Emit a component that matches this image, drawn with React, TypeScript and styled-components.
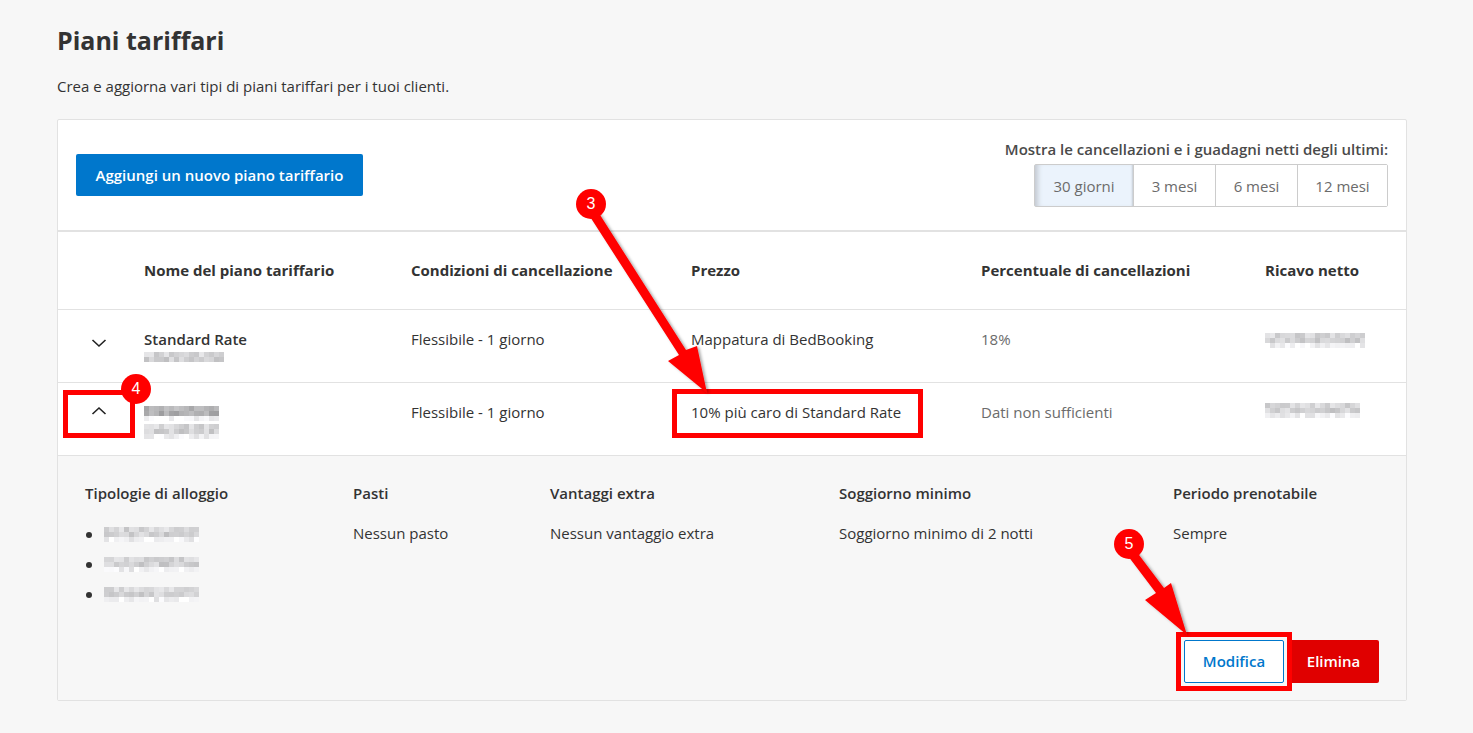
import React from "react";
import styled, { createGlobalStyle } from "styled-components";

const GlobalStyle = createGlobalStyle`
  html, body {
    margin: 0;
    padding: 0;
    background: #f7f7f7;
    color: #333;
    font-family: "Open Sans", "Noto Sans", "Liberation Sans", sans-serif;
    font-size: 15px;
    overflow: hidden;
  }
`;

const Page = styled.div`
  position: relative;
  width: 1473px;
  height: 733px;
  box-sizing: border-box;
  padding: 0 66px 0 57px;
`;

const Title = styled.h1`
  margin: 0;
  padding-top: 22px;
  font-size: 25px;
  line-height: 36px;
  font-weight: 700;
  color: #333;
`;

const Intro = styled.p`
  margin: 19px 0 0;
  font-size: 15px;
  line-height: 19px;
  color: #333;
`;

const Card = styled.section`
  margin-top: 23px;
  background: #fff;
  border: 1px solid #e2e2e2;
  border-radius: 2px;
  height: 582px;
  box-sizing: border-box;
`;

const Toolbar = styled.div`
  height: 112px;
  box-sizing: border-box;
  display: flex;
  justify-content: space-between;
  align-items: flex-start;
  padding: 19px 18px 0;
  border-bottom: 2px solid #e2e2e2;
`;

const PrimaryButton = styled.button`
  margin-top: 15px;
  width: 287px;
  height: 42px;
  border: 0;
  border-radius: 2px;
  background: #0077cc;
  color: #fff;
  font: 600 15px "Open Sans", sans-serif;
`;

const RangePicker = styled.div`
  display: flex;
  flex-direction: column;
  align-items: flex-end;
`;

const RangeLabel = styled.div`
  font-size: 15px;
  line-height: 20px;
  font-weight: 600;
  color: #4a4a4a;
  margin-bottom: 5px;
`;

const Segments = styled.div`
  display: flex;
  height: 43px;
  box-sizing: border-box;
  border: 1px solid #ccc;
  border-radius: 2px;
`;

const Segment = styled.div<{ $active?: boolean; $width: number }>`
  width: ${({ $width }) => $width}px;
  box-sizing: border-box;
  display: flex;
  align-items: center;
  justify-content: center;
  color: #6b6b6b;
  font-size: 15px;
  background: ${({ $active }) => ($active ? "#ebf3fc" : "#fff")};
  box-shadow: ${({ $active }) =>
    $active ? "inset 6px 0 5px -3px #c4cad2, inset -3px 0 2px -2px #c4cad2" : "none"};
  & + & {
    border-left: 1px solid #ccc;
  }
`;

const COLUMNS = "86px 267px 280px 290px 284px 1fr";

const Row = styled.div<{ $height: number; $pad: number }>`
  display: grid;
  grid-template-columns: ${COLUMNS};
  height: ${({ $height }) => $height}px;
  padding-top: ${({ $pad }) => $pad}px;
  box-sizing: border-box;
  align-items: start;
  border-bottom: 1px solid #e2e2e2;
`;

const HeadCell = styled.div`
  font-weight: 700;
  font-size: 15px;
  line-height: 20px;
  color: #333;
`;

const Cell = styled.div<{ $muted?: boolean }>`
  font-size: 15px;
  line-height: 20px;
  color: ${({ $muted }) => ($muted ? "#6b6b6b" : "#333")};
`;

const NameCell = styled.div<{ $offset?: number }>`
  display: flex;
  flex-direction: column;
  gap: 3px;
  padding-top: ${({ $offset }) => $offset ?? 0}px;
`;

const NetCell = styled.div<{ $offset?: number }>`
  padding-top: ${({ $offset }) => $offset ?? 0}px;
`;

const PlanName = styled.div`
  font-weight: 600;
  font-size: 15px;
  line-height: 20px;
  color: #333;
`;

const ChevronCell = styled.div<{ $up?: boolean }>`
  display: flex;
  justify-content: center;
  padding-right: 5px;
  padding-top: ${({ $up }) => ($up ? 4 : 9)}px;
`;

const Details = styled.div`
  height: 244px;
  box-sizing: border-box;
  background: #f7f7f7;
  padding: 27px 27px 17px;
  display: flex;
  flex-direction: column;
  justify-content: space-between;
`;

const DetailGrid = styled.div`
  display: grid;
  grid-template-columns: 268px 197px 289px 334px 1fr;
`;

const DetailTitle = styled.div`
  font-weight: 600;
  font-size: 15px;
  line-height: 20px;
  color: #333;
  margin-bottom: 20px;
`;

const DetailValue = styled.div`
  font-size: 15px;
  line-height: 20px;
  color: #333;
`;

const RoomList = styled.ul`
  margin: 0;
  padding: 0 0 0 19px;
  list-style: none;
  color: #333;
`;

const RoomItem = styled.li`
  position: relative;
  height: 30px;
  padding-top: 4px;
  box-sizing: border-box;
  &::before {
    content: "";
    position: absolute;
    left: -18px;
    top: 9px;
    width: 6px;
    height: 6px;
    border-radius: 50%;
    background: #333;
  }
`;

const Actions = styled.div`
  display: flex;
  justify-content: flex-end;
  gap: 4px;
`;

const OutlineButton = styled.button`
  width: 100px;
  height: 43px;
  padding-bottom: 2px;
  border: 1px solid #0077cc;
  border-radius: 2px;
  background: #fff;
  color: #0077cc;
  font: 600 15px "Open Sans", sans-serif;
`;

const DangerButton = styled.button`
  width: 91px;
  height: 43px;
  padding-bottom: 2px;
  border: 0;
  border-radius: 2px;
  background: #e00000;
  color: #fff;
  font: 600 15px "Open Sans", sans-serif;
`;

const Overlay = styled.svg`
  position: absolute;
  inset: 0;
  pointer-events: none;
`;

const Highlight = styled.div<{ $x: number; $y: number; $w: number; $h: number }>`
  position: absolute;
  left: ${({ $x }) => $x}px;
  top: ${({ $y }) => $y}px;
  width: ${({ $w }) => $w}px;
  height: ${({ $h }) => $h}px;
  box-sizing: border-box;
  border: 5px solid #ff0000;
`;

const Badge = styled.div<{ $x: number; $y: number }>`
  position: absolute;
  left: ${({ $x }) => $x - 15}px;
  top: ${({ $y }) => $y - 15}px;
  width: 30px;
  height: 30px;
  border-radius: 50%;
  background: #ff0000;
  color: #fff;
  display: flex;
  align-items: center;
  justify-content: center;
  font: 400 16px "Liberation Sans", sans-serif;
`;

// blurred-out text from the original capture
const Mosaic: React.FC<{ width: number; rows: number; seed: number; dark?: boolean }> = ({ width, rows, seed, dark }) => {
  const cell = 5;
  const cols = Math.round(width / cell);
  const rects = [];
  let s = seed;
  for (let r = 0; r < rows; r++) {
    for (let c = 0; c < cols; c++) {
      s = (s * 9301 + 49297) % 233280;
      const base = (r === 0 ? 195 : r === 1 ? 190 : 222) - (dark && r < 2 ? 35 : 0);
      const v = base + Math.round((s / 233280) * 38);
      rects.push(
        <rect key={`${r}-${c}`} x={c * cell} y={r * cell} width={cell} height={cell} fill={`rgb(${v},${v},${v + 2})`} />
      );
    }
  }
  return (
    <svg width={cols * cell} height={rows * cell} style={{ display: "block" }}>
      {rects}
    </svg>
  );
};

const Chevron: React.FC<{ up?: boolean }> = ({ up }) => (
  <svg width="16" height="10" viewBox="0 0 16 10" fill="none">
    <path d={up ? "M1.5 8 L8 2 L14.5 8" : "M1.5 2 L8 8 L14.5 2"} stroke="#222" strokeWidth="1.6" />
  </svg>
);

const App: React.FC = () => (
  <Page>
    <GlobalStyle />
    <Title>Piani tariffari</Title>
    <Intro>Crea e aggiorna vari tipi di piani tariffari per i tuoi clienti.</Intro>
    <Card>
      <Toolbar>
        <PrimaryButton>Aggiungi un nuovo piano tariffario</PrimaryButton>
        <RangePicker>
          <RangeLabel>Mostra le cancellazioni e i guadagni netti degli ultimi:</RangeLabel>
          <Segments>
            <Segment $active $width={98}>30 giorni</Segment>
            <Segment $width={82}>3 mesi</Segment>
            <Segment $width={82}>6 mesi</Segment>
            <Segment $width={90}>12 mesi</Segment>
          </Segments>
        </RangePicker>
      </Toolbar>
      <Row $height={78} $pad={28}>
        <span />
        <HeadCell>Nome del piano tariffario</HeadCell>
        <HeadCell>Condizioni di cancellazione</HeadCell>
        <HeadCell>Prezzo</HeadCell>
        <HeadCell>Percentuale di cancellazioni</HeadCell>
        <HeadCell>Ricavo netto</HeadCell>
      </Row>
      <Row $height={73} $pad={19}>
        <ChevronCell><Chevron /></ChevronCell>
        <NameCell>
          <PlanName>Standard Rate</PlanName>
          <Mosaic width={80} rows={2} seed={17} />
        </NameCell>
        <Cell>Flessibile - 1 giorno</Cell>
        <Cell>Mappatura di BedBooking</Cell>
        <Cell $muted>18%</Cell>
        <NetCell $offset={4}><Mosaic width={100} rows={3} seed={41} /></NetCell>
      </Row>
      <Row $height={73} $pad={19}>
        <ChevronCell $up><Chevron up /></ChevronCell>
        <NameCell $offset={4}>
          <Mosaic width={75} rows={3} seed={73} dark />
          <Mosaic width={75} rows={3} seed={91} />
        </NameCell>
        <Cell>Flessibile - 1 giorno</Cell>
        <Cell>10% più caro di Standard Rate</Cell>
        <Cell $muted>Dati non sufficienti</Cell>
        <NetCell $offset={1}><Mosaic width={95} rows={3} seed={123} /></NetCell>
      </Row>
      <Details>
        <DetailGrid>
          <div>
            <DetailTitle>Tipologie di alloggio</DetailTitle>
            <RoomList>
              <RoomItem><Mosaic width={95} rows={3} seed={201} /></RoomItem>
              <RoomItem><Mosaic width={95} rows={3} seed={233} /></RoomItem>
              <RoomItem><Mosaic width={95} rows={3} seed={277} /></RoomItem>
            </RoomList>
          </div>
          <div>
            <DetailTitle>Pasti</DetailTitle>
            <DetailValue>Nessun pasto</DetailValue>
          </div>
          <div>
            <DetailTitle>Vantaggi extra</DetailTitle>
            <DetailValue>Nessun vantaggio extra</DetailValue>
          </div>
          <div>
            <DetailTitle>Soggiorno minimo</DetailTitle>
            <DetailValue>Soggiorno minimo di 2 notti</DetailValue>
          </div>
          <div>
            <DetailTitle>Periodo prenotabile</DetailTitle>
            <DetailValue>Sempre</DetailValue>
          </div>
        </DetailGrid>
        <Actions>
          <OutlineButton>Modifica</OutlineButton>
          <DangerButton>Elimina</DangerButton>
        </Actions>
      </Details>
    </Card>

    <Highlight $x={63} $y={390} $w={72} $h={48} />
    <Highlight $x={672} $y={389} $w={251} $h={49} />
    <Highlight $x={1176} $y={632} $w={116} $h={59} />
    <Overlay width="1473" height="733" viewBox="0 0 1473 733">
      <defs>
        <filter id="arrowShadow" x="-20%" y="-20%" width="140%" height="140%">
          <feDropShadow dx="2" dy="1" stdDeviation="1.5" floodColor="#000" floodOpacity="0.35" />
        </filter>
      </defs>
      <g fill="#ff0000" filter="url(#arrowShadow)">
        <polygon points="595,207 587,212 679,355 668,361 707,393 697,346 686,350" />
        <polygon points="1133,547 1125,552 1156,593 1145,600 1187,635 1171,583 1164,588" />
      </g>
    </Overlay>
    <Badge $x={591} $y={204}>3</Badge>
    <Badge $x={136} $y={389}>4</Badge>
    <Badge $x={1129} $y={544}>5</Badge>
  </Page>
);

export default App;
